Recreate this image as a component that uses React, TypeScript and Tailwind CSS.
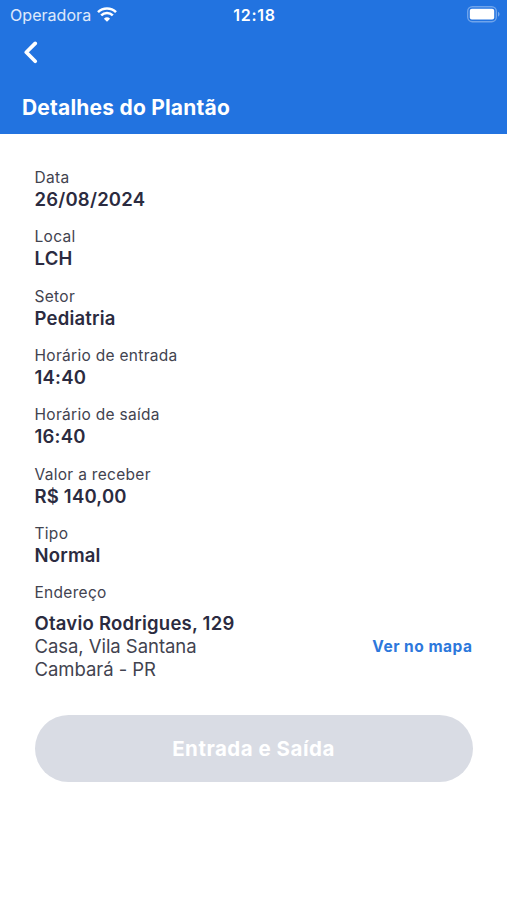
interface DetailItemProps {
    label: string;
    value: string;
}

const details: DetailItemProps[] = [
    { label: 'Data', value: '26/08/2024' },
    { label: 'Local', value: 'LCH' },
    { label: 'Setor', value: 'Pediatria' },
    { label: 'Horário de entrada', value: '14:40' },
    { label: 'Horário de saída', value: '16:40' },
    { label: 'Valor a receber', value: 'R$ 140,00' },
    { label: 'Tipo', value: 'Normal' },
];

const WifiIcon = () => (
    <svg className="-mt-[2px]" width="20" height="15" viewBox="0 0 20 15" fill="none">
        <path
            d="M1 5.1a12.9 12.9 0 0 1 18 0M4.2 8.4a8.3 8.3 0 0 1 11.6 0"
            stroke="white"
            strokeWidth="2.6"
        />
        <path d="M10 14.8 6.9 11.7a4.5 4.5 0 0 1 6.2 0Z" fill="white" />
    </svg>
);

const BatteryIcon = () => (
    <svg width="34" height="17" viewBox="0 0 34 17" fill="none">
        <rect
            x="0.7"
            y="0.7"
            width="28.6"
            height="15"
            rx="4.6"
            stroke="white"
            strokeOpacity="0.35"
            strokeWidth="1.4"
        />
        <rect x="2.8" y="2.8" width="24.4" height="10.6" rx="2" fill="white" />
        <path d="M31 5.8c2 .7 2 4.1 0 4.8Z" fill="white" fillOpacity="0.4" />
    </svg>
);

const StatusBar = () => (
    <div className="grid h-[30px] grid-cols-3 items-center pl-[10px] pr-[6px]">
        <div className="flex items-center gap-[6px]">
            <span className="text-[16px] leading-5 tracking-[0.05px] text-white/85">
                Operadora
            </span>
            <WifiIcon />
        </div>
        <span className="-mt-px pr-[2px] text-center text-[16px] leading-5 font-semibold tracking-[0.7px]">
            12:18
        </span>
        <div className="-mt-px flex justify-end">
            <BatteryIcon />
        </div>
    </div>
);

const Header = () => (
    <header className="h-[133.5px] bg-[#2273e0] text-white">
        <StatusBar />
        <button className="mt-[11px] ml-[23px] block" aria-label="Voltar">
            <svg width="15" height="23" viewBox="0 0 15 23" fill="none">
                <path
                    d="M12.2 2.4 3.3 11.3 12.2 20.2"
                    stroke="white"
                    strokeWidth="3.7"
                    strokeLinecap="round"
                    strokeLinejoin="round"
                />
            </svg>
        </button>
        <h1 className="mt-[30px] ml-[22px] text-[21px] leading-7 font-bold tracking-[0.2px]">
            Detalhes do Plantão
        </h1>
    </header>
);

const DetailItem = ({ label, value }: DetailItemProps) => (
    <div className="h-[59.33px]">
        <dt className="text-[15.5px] leading-5 tracking-[0.3px] text-[#42434f]">
            {label}
        </dt>
        <dd className="text-[18.5px] leading-[22px] font-semibold tracking-[0.2px]">
            {value}
        </dd>
    </div>
);

const App = () => {
    return (
        <div className="min-h-screen bg-white font-['Inter',sans-serif] text-[#2b2b40]">
            <Header />
            <main className="px-[34.5px] pt-[34.5px]">
                <dl>
                    {details.map((item) => (
                        <DetailItem key={item.label} {...item} />
                    ))}
                </dl>
                <p className="text-[15.5px] leading-5 tracking-[0.3px] text-[#42434f]">
                    Endereço
                </p>
                <div className="mt-[9px] flex items-center justify-between">
                    <address className="text-[18.5px] leading-[23px] text-[#42434f] not-italic">
                        <p className="font-semibold tracking-[0.23px] text-[#2b2b40]">
                            Otavio Rodrigues, 129
                        </p>
                        <p className="tracking-[-0.05px]">Casa, Vila Santana</p>
                        <p className="tracking-[-0.05px]">Cambará - PR</p>
                    </address>
                    <button className="pb-px text-[15.5px] font-bold tracking-[0.5px] text-[#2d78dc]">
                        Ver no mapa
                    </button>
                </div>
                <button className="mt-[34px] block h-[67px] w-full rounded-full bg-[#d9dce4] pt-px text-[20.5px] font-bold tracking-[0.5px] text-white">
                    Entrada e Saída
                </button>
            </main>
        </div>
    );
};

export default App;
